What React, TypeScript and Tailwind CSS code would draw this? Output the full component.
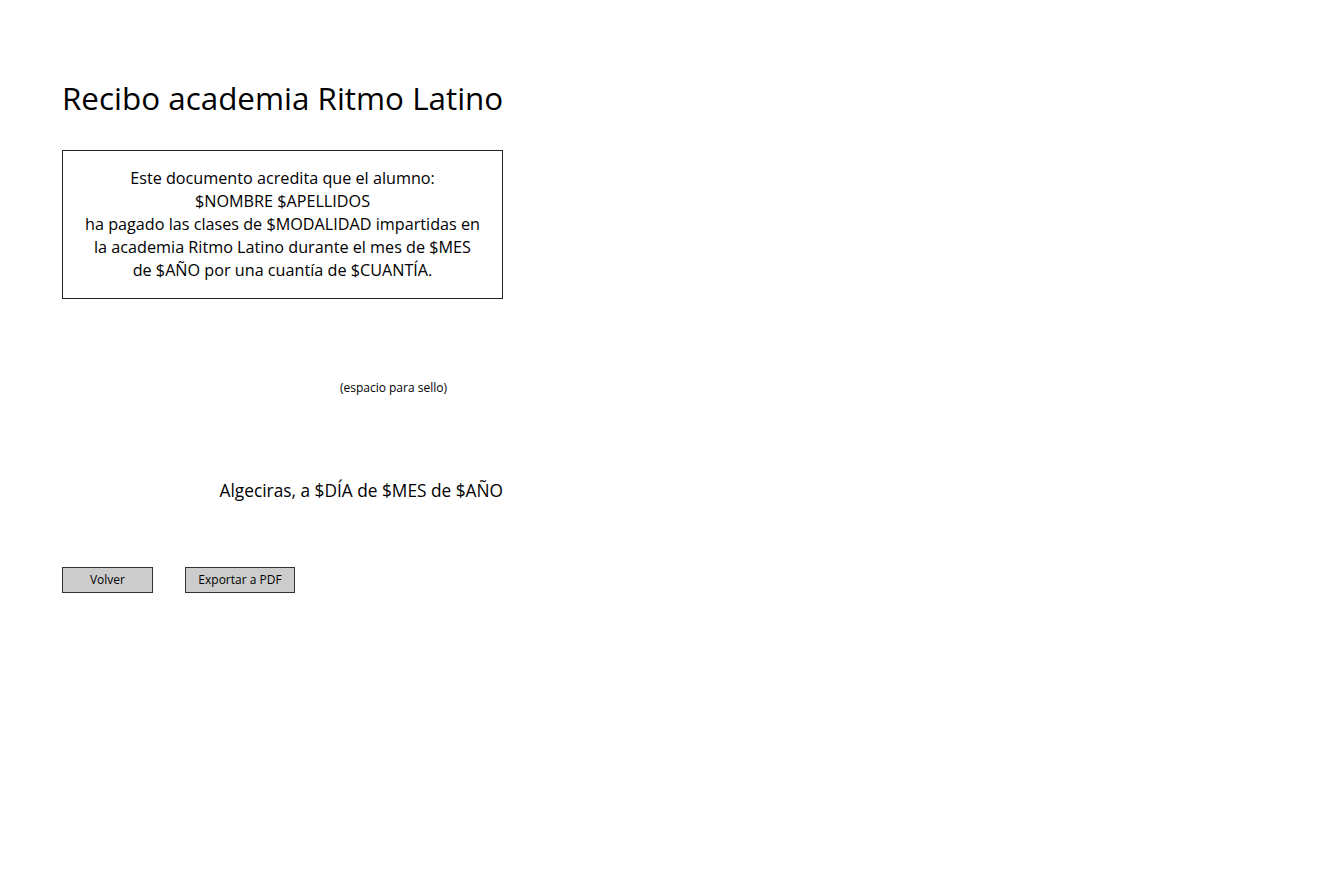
import React from "react";

export default function App() {
  const font = { fontFamily: '"Open Sans", "Noto Sans", sans-serif' };
  return (
    <div className="min-h-[896px] w-[1330px] bg-white text-black" style={font}>
      <div className="flex w-[441px] flex-col pl-0 ml-[62px] pt-[76px]">
        <h1 className="h-[44px] text-[31.4px] leading-[44px] whitespace-nowrap">
          Recibo academia Ritmo Latino
        </h1>
        <div className="mt-[30px] h-[149px] border border-[#222] pt-[16px] text-center text-[16.2px] leading-[23px]">
          <p>Este documento acredita que el alumno:</p>
          <p>$NOMBRE $APELLIDOS</p>
          <p>ha pagado las clases de $MODALIDAD impartidas en</p>
          <p>la academia Ritmo Latino durante el mes de $MES</p>
          <p>de $AÑO por una cuantía de $CUANTÍA.</p>
        </div>
        <div className="mt-[81px] flex justify-end pr-[56px]">
          <span className="text-[12px] leading-[16px]">(espacio para sello)</span>
        </div>
        <div className="mt-[83px] flex justify-end">
          <span className="text-[17.3px] leading-[24px]">Algeciras, a $DÍA de $MES de $AÑO</span>
        </div>
        <div className="mt-[64px] flex gap-[32px]">
          <button className="h-[26px] w-[91px] border border-[#333] bg-[#cccccc] text-[12px] leading-[24px]">
            Volver
          </button>
          <button className="h-[26px] w-[110px] border border-[#333] bg-[#cccccc] text-[12px] leading-[24px]">
            Exportar a PDF
          </button>
        </div>
      </div>
    </div>
  );
}
